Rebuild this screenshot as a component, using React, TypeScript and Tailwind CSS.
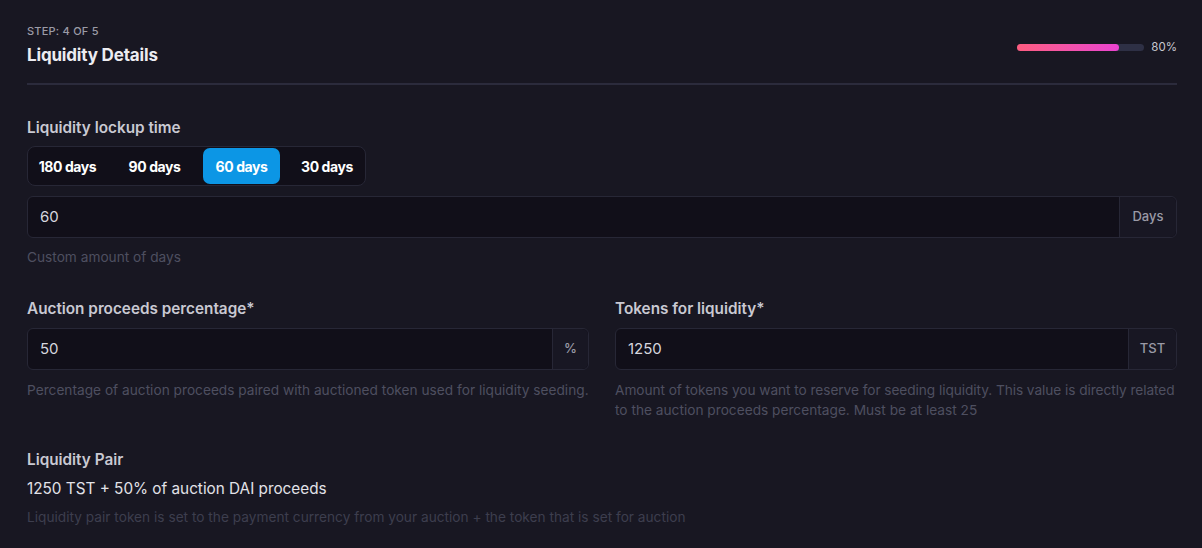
import React from "react";

function InputWithAddon({ value, addon, addonW }: { value: string; addon: string; addonW: string }) {
  return (
    <div className="flex h-[42px] w-full rounded-[6px] border border-[#272736] bg-[#110f19]">
      <div className="flex flex-1 items-center pl-[12px] text-[15px] text-[#d6d6de]">{value}</div>
      <div className={`flex ${addonW} items-center justify-center border-l border-[#272736] bg-[#181723] rounded-r-[6px] text-[13px] font-medium text-[#9a9aa6]`}>
        {addon}
      </div>
    </div>
  );
}

export default function App() {
  const days = [
    { label: "180 days", w: "w-[77px]" },
    { label: "90 days", w: "w-[77px]" },
    { label: "60 days", w: "w-[77px]" },
    { label: "30 days", w: "w-[74px]" },
  ];
  return (
    <div className="min-h-[548px] w-[1202px] bg-[#181722] pl-[27px] pr-[25px] pt-[24px] font-['Inter',sans-serif] text-white">
      <div className="flex items-start justify-between">
        <div>
          <div className="text-[11px] font-medium uppercase tracking-[0.02em] text-[#9b9ba6] leading-[14px]">Step: 4 of 5</div>
          <div className="mt-[6px] text-[17px] font-bold leading-[22px] tracking-[-0.01em] text-[#ececf1]">Liquidity Details</div>
        </div>
        <div className="mt-[15px] flex items-center gap-[7px]">
          <div className="h-[7px] w-[127px] rounded-full bg-[#2e3045]">
            <div className="h-full w-[80%] rounded-full bg-gradient-to-r from-[#fd5c7f] to-[#ea42d0]" />
          </div>
          <div className="text-[11.5px] text-[#c8c8d0]">80%</div>
        </div>
      </div>
      <div className="mt-[17px] h-[2px] bg-[#2b2b3c]" />

      <div className="mt-[33px] text-[15.3px] font-semibold leading-[20px] text-[#c9c9d2]">Liquidity lockup time</div>
      <div className="mt-[8px] inline-flex h-[40px] items-center gap-[10px] rounded-[8px] border border-[#272736] bg-[#110f19] px-[1px]">
        {days.map((d) => (
          <div
            key={d.label}
            className={
              d.label === "60 days"
                ? `flex h-[36px] ${d.w} items-center justify-center rounded-[7px] bg-[#0c96e5] text-[14px] font-bold tracking-[-0.03em] text-white`
                : `flex h-[36px] ${d.w} items-center justify-center text-[14px] font-bold tracking-[-0.03em] text-white`
            }
          >
            {d.label}
          </div>
        ))}
      </div>
      <div className="mt-[10px]">
        <InputWithAddon value="60" addon="Days" addonW="w-[57px]" />
      </div>
      <div className="mt-[9px] text-[13.7px] leading-[20px] text-[#4e4f60]">Custom amount of days</div>

      <div className="mt-[32px] grid grid-cols-2 gap-[26px]">
        <div>
          <div className="text-[15.3px] font-semibold leading-[20px] text-[#c9c9d2]">Auction proceeds percentage*</div>
          <div className="mt-[9px]">
            <InputWithAddon value="50" addon="%" addonW="w-[36px]" />
          </div>
          <div className="mt-[10px] text-[13.7px] leading-[20px] text-[#4e4f60] whitespace-nowrap">
            Percentage of auction proceeds paired with auctioned token used for liquidity seeding.
          </div>
        </div>
        <div>
          <div className="text-[15.3px] font-semibold leading-[20px] text-[#c9c9d2]">Tokens for liquidity*</div>
          <div className="mt-[9px]">
            <InputWithAddon value="1250" addon="TST" addonW="w-[48px]" />
          </div>
          <div className="mt-[10px] text-[13.7px] leading-[20px] text-[#4e4f60] whitespace-nowrap">
            <div className="tracking-[-0.005em]">Amount of tokens you want to reserve for seeding liquidity. This value is directly related</div>
            <div>to the auction proceeds percentage. Must be at least 25</div>
          </div>
        </div>
      </div>

      <div className="mt-[30px] text-[15.3px] font-semibold leading-[20px] text-[#c9c9d2]">Liquidity Pair</div>
      <div className="mt-[9px] text-[15.3px] leading-[20px] text-[#e2e2e8]">1250 TST + 50% of auction DAI proceeds</div>
      <div className="mt-[8px] text-[13.7px] leading-[20px] text-[#3d3e4e]">
        Liquidity pair token is set to the payment currency from your auction + the token that is set for auction
      </div>
    </div>
  );
}
